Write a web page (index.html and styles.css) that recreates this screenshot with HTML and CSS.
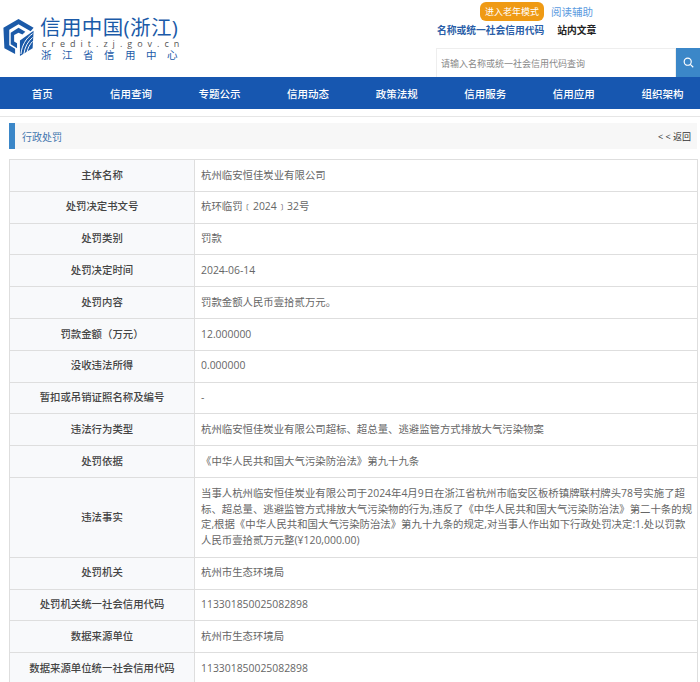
FILE: index.html
```html
<!DOCTYPE html>
<html lang="zh-CN">
<head>
    <meta charset="UTF-8">
    <meta name="viewport" content="width=device-width, initial-scale=1.0">
    <title>行政处罚</title>
    <link rel="stylesheet" href="styles.css">
</head>
<body>

    <!-- Header -->
    <header class="top">
        <div class="logo">
            <svg class="logo-mark" width="31" height="37" viewBox="0 0 31 38">
                <path fill="#1b5aa8" d="M15.5 0 31 9 28 12.500 15.500 5.500 6 11 6 27 12 30.500 12 36 1 30 0 9Z"/>
                <path fill="#1b5aa8" d="M15.500 9 22.500 13 19.500 16 15.500 14 11 16.500 11 23 14 25 14 30 7.500 26 7.500 14Z"/>
                <path fill="#1b5aa8" d="M17 38 17 22 31 12 30 30Z"/>
                <path fill="none" stroke="#fff" stroke-width="1" d="M18 36C19 27 23 20 30 15M21 36C22 29 25 23 30 19M24 35C25 30 27 26 30 23"/>
            </svg>
            <div class="logo-text">
                <div class="logo-title">信用中国(浙江)</div>
                <div class="logo-url">credit.zj.gov.cn</div>
                <div class="logo-org">浙江省信用中心</div>
            </div>
        </div>
        <div class="tools">
            <div class="tools-row">
                <a class="elder-btn">进入老年模式</a>
                <a class="read-link">阅读辅助</a>
            </div>
            <div class="tabs">
                <a class="tab-on">名称或统一社会信用代码</a>
                <a class="tab-off">站内文章</a>
            </div>
            <div class="search">
                <input type="text" placeholder="请输入名称或统一社会信用代码查询">
                <button type="button" aria-label="搜索">
                    <svg width="11" height="11" viewBox="0 0 14 14" fill="none" stroke="#fff" stroke-width="1.500">
                        <circle cx="6" cy="6" r="4.500"/>
                        <path d="M9.300 9.300 13 13"/>
                    </svg>
                </button>
            </div>
        </div>
    </header>

    <!-- Navigation Bar -->
    <nav class="nav">
        <a>首页</a>
        <a>信用查询</a>
        <a>专题公示</a>
        <a>信用动态</a>
        <a>政策法规</a>
        <a>信用服务</a>
        <a>信用应用</a>
        <a>组织架构</a>
    </nav>

    <main class="main">
        <!-- Page Title -->
        <section class="title-bar">
            <h2>行政处罚</h2>
            <a class="back">&lt; &lt; 返回</a>
        </section>

        <!-- Detail Table -->
        <table class="detail">
            <tr><th>主体名称</th><td>杭州临安恒佳炭业有限公司</td></tr>
            <tr><th>处罚决定书文号</th><td>杭环临罚﹝2024﹞32号</td></tr>
            <tr><th>处罚类别</th><td>罚款</td></tr>
            <tr><th>处罚决定时间</th><td>2024-06-14</td></tr>
            <tr><th>处罚内容</th><td>罚款金额人民币壹拾贰万元。</td></tr>
            <tr><th>罚款金额（万元）</th><td>12.000000</td></tr>
            <tr><th>没收违法所得</th><td>0.000000</td></tr>
            <tr><th>暂扣或吊销证照名称及编号</th><td>-</td></tr>
            <tr><th>违法行为类型</th><td>杭州临安恒佳炭业有限公司超标、超总量、逃避监管方式排放大气污染物案</td></tr>
            <tr><th>处罚依据</th><td>《中华人民共和国大气污染防治法》第九十九条</td></tr>
            <tr><th>违法事实</th><td class="fact">当事人杭州临安恒佳炭业有限公司于2024年4月9日在浙江省杭州市临安区板桥镇牌联村牌头78号实施了超<br>标、超总量、逃避监管方式排放大气污染物的行为,违反了《中华人民共和国大气污染防治法》第二十条的规<br>定,根据《中华人民共和国大气污染防治法》第九十九条的规定,对当事人作出如下行政处罚决定:1.处以罚款<br>人民币壹拾贰万元整(¥120,000.00)</td></tr>
            <tr><th>处罚机关</th><td>杭州市生态环境局</td></tr>
            <tr><th>处罚机关统一社会信用代码</th><td>113301850025082898</td></tr>
            <tr><th>数据来源单位</th><td>杭州市生态环境局</td></tr>
            <tr><th>数据来源单位统一社会信用代码</th><td>113301850025082898</td></tr>
        </table>
    </main>

</body>
</html>
```

FILE: styles.css
```css
body {
    font-family: "Open Sans", "Noto Sans CJK SC", sans-serif;
    margin: 0;
    padding: 0;
    background: white;
    color: #666;
    font-size: 12px;
}

/* Header */
.top {
    display: flex;
    justify-content: space-between;
    height: 77px;
}

.logo {
    display: flex;
    align-items: flex-start;
    gap: 6px;
    padding: 15px 0 0 3px;
}

.logo-mark {
    margin-top: 4px;
}

.logo-title {
    font-size: 20.500px;
    line-height: 24px;
    letter-spacing: 0.400px;
    color: #1b5aa8;
    white-space: nowrap;
}

.logo-url {
    font-size: 9px;
    line-height: 10px;
    letter-spacing: 5px;
    color: #555;
    margin: 0 0 0 2px;
}

.logo-org {
    font-size: 10.500px;
    line-height: 13px;
    letter-spacing: 10.500px;
    margin-left: 1px;
    color: #1b5aa8;
    white-space: nowrap;
}

.tools {
    width: 264px;
    display: flex;
    flex-direction: column;
    align-items: flex-start;
}

.tools-row {
    display: flex;
    align-items: center;
    gap: 7px;
    margin: 2px 0 0 44px;
    height: 19px;
}

.elder-btn {
    background: #ef9a14;
    color: white;
    font-size: 9px;
    line-height: 19px;
    padding: 0 5px;
    border-radius: 6px;
}

.read-link {
    color: #5b9be0;
    font-size: 10.500px;
}

.tabs {
    display: flex;
    gap: 13px;
    margin: 0;
    font-size: 9.750px;
    line-height: 20px;
    padding: 0 0 0 1px;
    font-weight: bold;
}

.tab-on {
    color: #2a5ea8;
}

.tab-off {
    color: #222;
}

.search {
    display: flex;
    align-self: stretch;
    height: 29px;
    margin-top: 7px;
}

.search input {
    flex: 1;
    min-width: 0;
    border: 1px solid #eee;
    border-bottom: 0;
    padding: 0 4px;
    font-family: inherit;
    font-size: 9px;
    outline: none;
}

.search input::placeholder {
    color: #888;
}

.search button {
    width: 24px;
    padding: 0;
    border: 0;
    background: #3b87c8;
    display: flex;
    align-items: center;
    justify-content: center;
}

/* Navigation Bar */
.nav {
    display: flex;
    background: #1757b0;
    height: 32px;
    align-items: center;
    overflow: hidden;
    padding-top: 1px;
    box-sizing: border-box;
}

.nav a {
    flex: 0 0 88.600px;
    text-align: center;
    color: white;
    font-size: 10.500px;
    font-weight: 500;
}

.nav a:first-child {
    margin-left: -2px;
}

/* Page Title */
.main {
    margin-top: 7px;
    border-top: 1px solid #e6e6e6;
    padding-top: 6px;
}

.title-bar {
    display: flex;
    justify-content: space-between;
    align-items: center;
    height: 26px;
    margin: 0 3px 10px 9px;
    background: #f7f7f7;
    border-left: 6px solid #3b87c8;
}

.title-bar h2 {
    margin: 0 0 0 7px;
    font-size: 10px;
    font-weight: normal;
    color: #3f74ad;
}

.back {
    font-size: 9px;
    color: #333;
    margin-right: 6px;
}

/* Detail Table */
.detail {
    border-collapse: collapse;
    table-layout: fixed;
    width: 689px;
    margin-left: 9px;
}

.detail th,
.detail td {
    border: 1px solid #dedede;
    height: 31.800px;
    padding: 0 6px;
    font-size: 10.400px;
    line-height: 15.700px;
    box-sizing: border-box;
}

.detail td.fact {
    padding: 8px 6px;
    white-space: nowrap;
}

.detail th {
    width: 185px;
    background: #f8f9fb;
    color: #444;
    font-weight: 500;
    text-align: center;
    white-space: nowrap;
    padding: 0;
}
```
